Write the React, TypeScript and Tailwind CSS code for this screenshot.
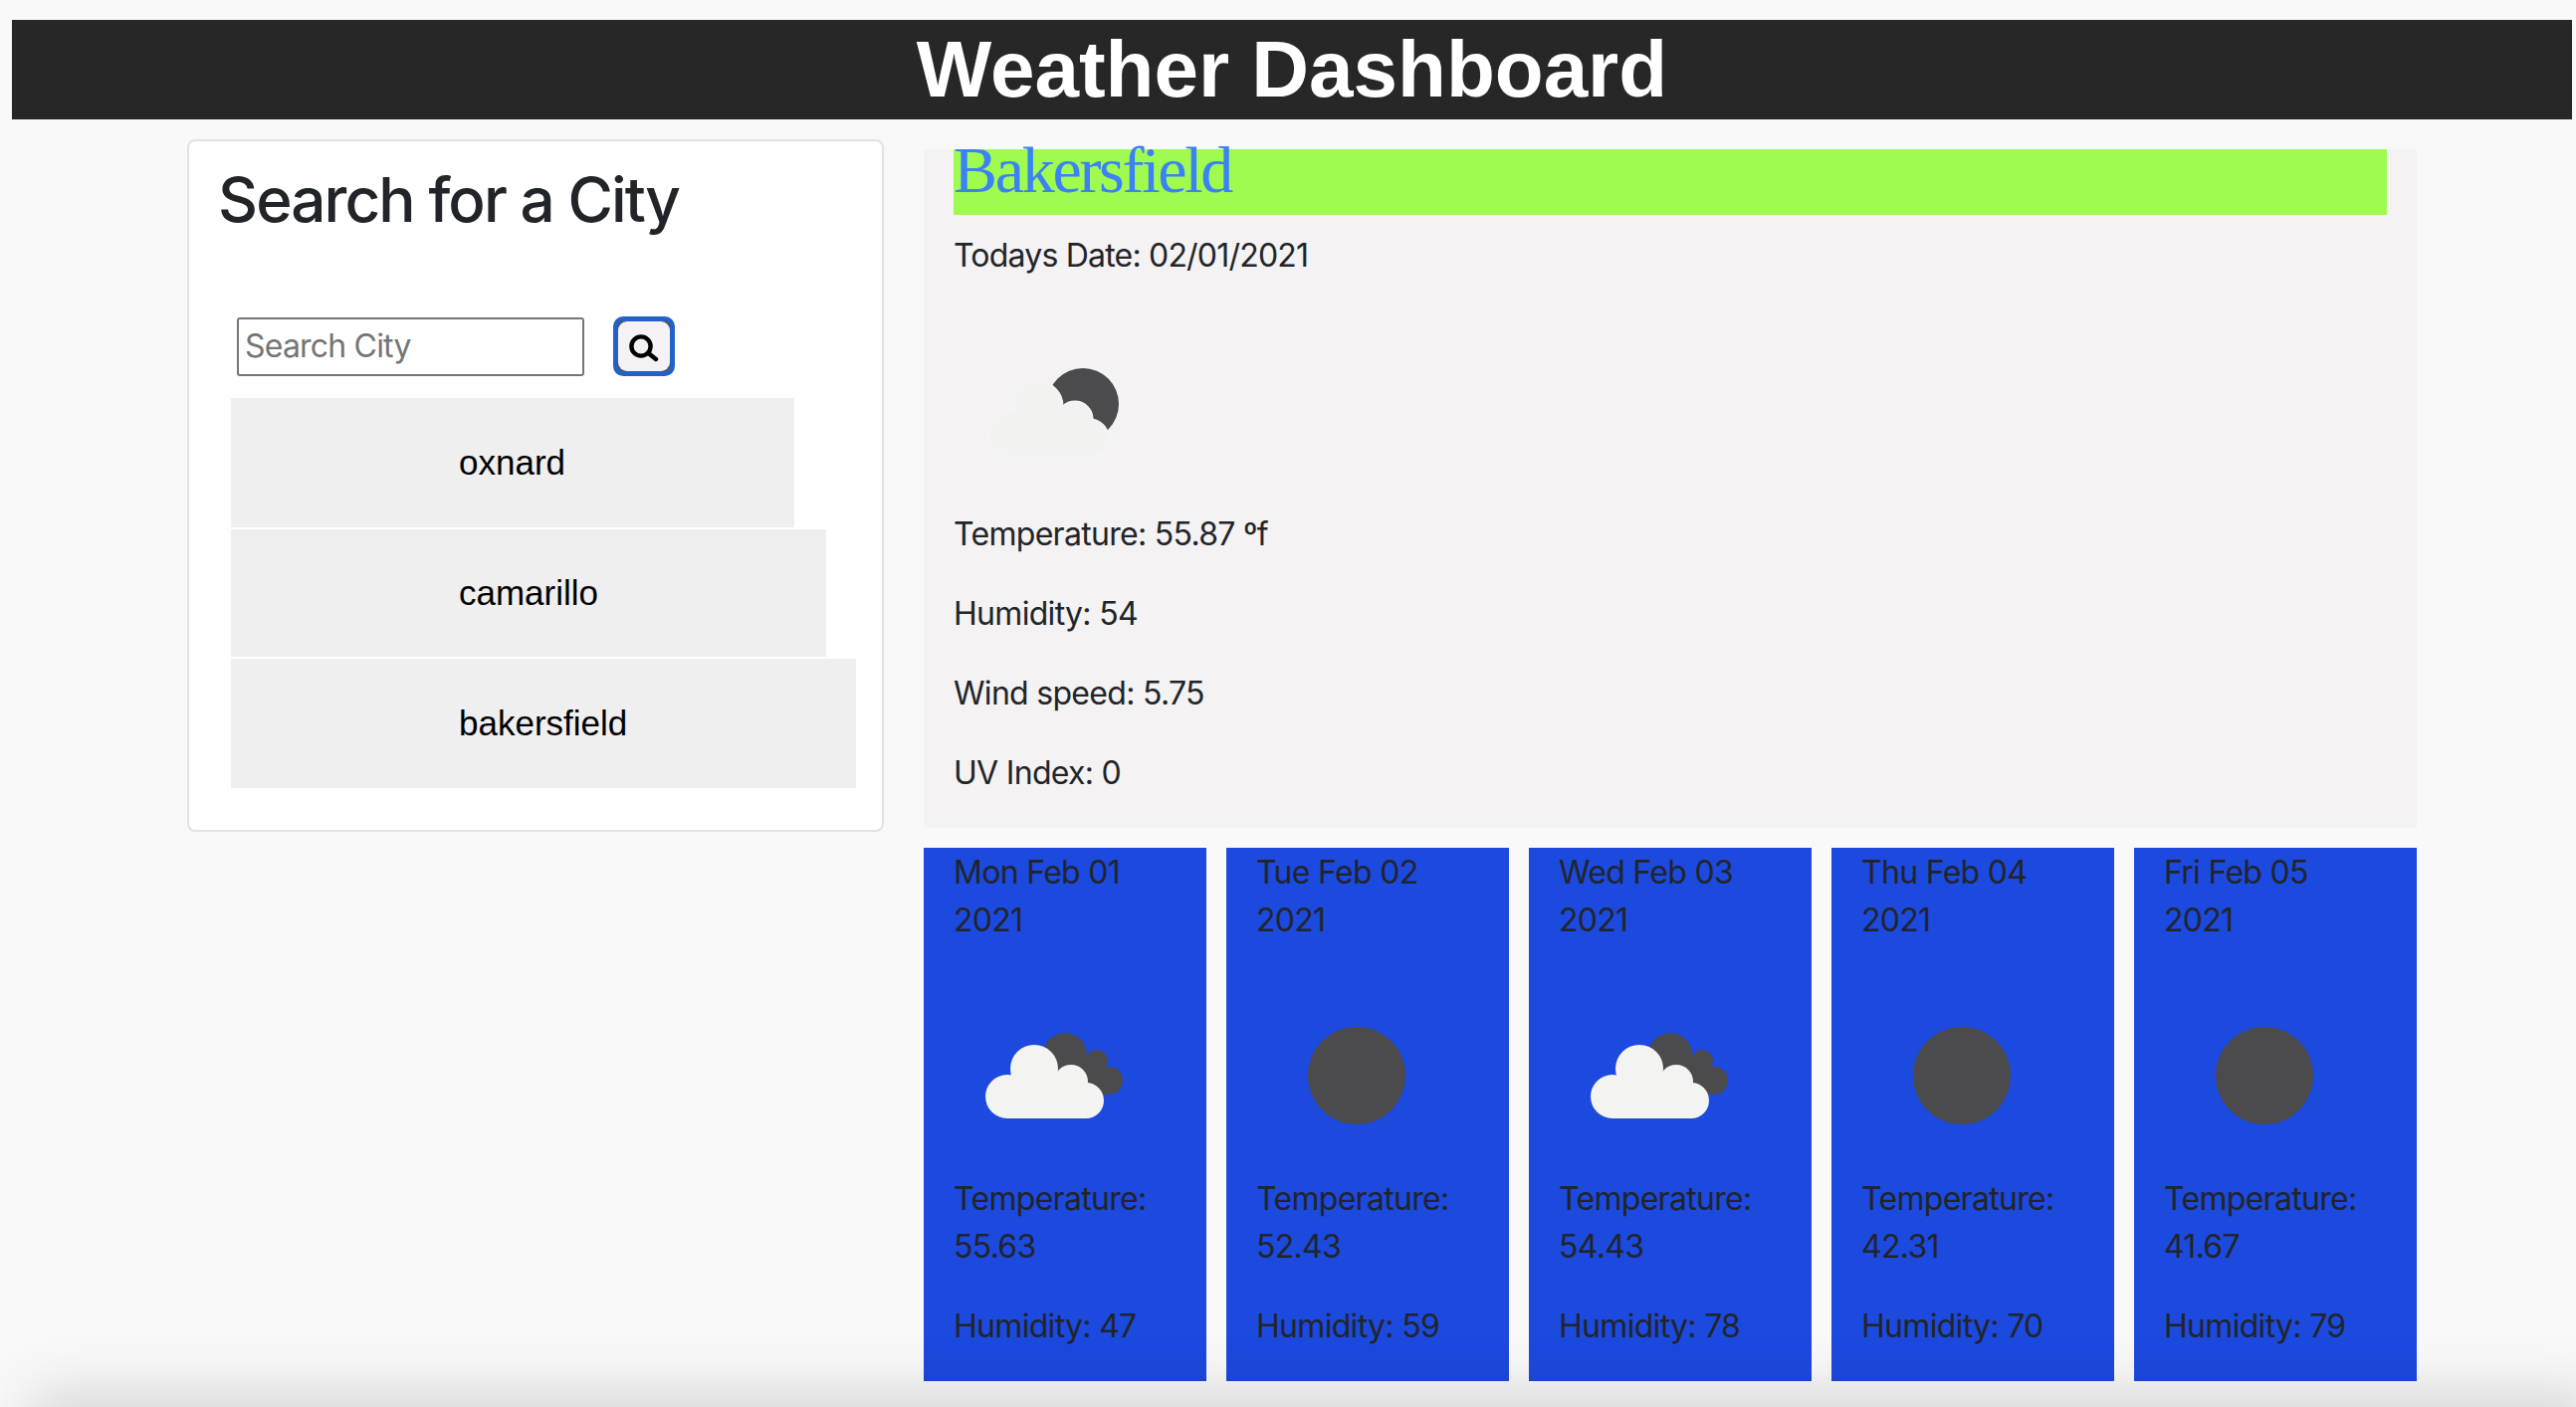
import React from "react";

const sans = "font-['Inter',sans-serif]";

function SearchIcon() {
  return (
    <svg width="32" height="32" viewBox="0 0 32 32" fill="none" stroke="#000" strokeWidth="4.4" strokeLinecap="round">
      <circle cx="13" cy="16" r="9.6" />
      <path d="M20.5 23l7.5 6" />
    </svg>
  );
}

function CloudShape({ fill, stroke, sw }: { fill: string; stroke?: string; sw?: number }) {
  return (
    <g fill={fill} stroke={stroke} strokeWidth={sw}>
      <circle cx="54" cy="122" r="22" />
      <circle cx="81" cy="94" r="24" />
      <circle cx="118" cy="107" r="17" />
      <circle cx="133" cy="126" r="18" />
      <rect x="54" y="106" width="80" height="38" />
    </g>
  );
}

function MainIcon() {
  return (
    <svg viewBox="0 0 200 200" width="200" height="200" className="block">
      <circle cx="130" cy="93" r="36" fill="#4b4a4d" />
      <g transform="translate(4,1)">
        <CloudShape fill="#f5f4f4" stroke="#f5f4f4" sw={3} />
        <CloudShape fill="#f2f2f0" />
      </g>
    </svg>
  );
}

function CloudsIcon() {
  return (
    <svg viewBox="0 0 200 200" width="200" height="200" className="block">
      <g fill="#4b4a4d">
        <circle cx="112" cy="80" r="22" />
        <circle cx="144" cy="86" r="11" />
        <circle cx="156" cy="106" r="14" />
        <rect x="112" y="84" width="40" height="36" />
      </g>
      <CloudShape fill="#f3f3f1" />
    </svg>
  );
}

function SphereIcon() {
  return (
    <svg viewBox="0 0 200 200" width="200" height="200" className="block">
      <circle cx="101" cy="101" r="49" fill="#4b4a4d" />
    </svg>
  );
}

const days = [
  { d: "Mon Feb 01", t: "55.63", h: "47", c: true },
  { d: "Tue Feb 02", t: "52.43", h: "59", c: false },
  { d: "Wed Feb 03", t: "54.43", h: "78", c: true },
  { d: "Thu Feb 04", t: "42.31", h: "70", c: false },
  { d: "Fri Feb 05", t: "41.67", h: "79", c: false },
];

const cities = [
  { n: "oxnard", w: "w-[566px]", h: "h-[130px]" },
  { n: "camarillo", w: "w-[598px]", h: "h-[128px]" },
  { n: "bakersfield", w: "w-[628px]", h: "h-[130px]" },
];

export default function App() {
  return (
    <div className={`relative h-[1414px] overflow-hidden bg-[#f9f9f9] pt-5 text-[32px] leading-[48px] text-[#212529] ${sans}`}>
      <header className="ml-3 mr-1 flex h-[100px] items-center justify-center bg-[#282728]">
        <h1 className="font-['Liberation_Sans',sans-serif] text-[80px] font-bold leading-none text-white">Weather Dashboard</h1>
      </header>

      <main className="ml-[188px] mt-5 flex items-start">
        <section className="h-[696px] w-[700px] rounded-lg border-2 border-[#e2e2e2] bg-white pl-[29px] pt-[20px]">
          <h2 className="text-[62px] font-medium leading-[77px] tracking-[-1.9px]">Search for a City</h2>
          <form className="ml-[19px] mt-[79px] flex items-center">
            <div className="flex h-[59px] w-[349px] items-center rounded-[3px] border-2 border-[#767676] bg-white pl-[6px] text-[32px] tracking-[-0.8px] text-[#757575]">
              Search City
            </div>
            <button type="button" className="ml-[29px] h-[60px] w-[62px] rounded-[10px] border-[5px] border-[#2360c8] bg-[#555555]">
              <span className="flex h-full w-full items-center justify-center rounded-[9px] bg-[#f4f2f3]">
                <SearchIcon />
              </span>
            </button>
          </form>
          <div className="ml-[13px] mt-[22px] flex flex-col gap-[2px]">
            {cities.map((c) => (
              <div key={c.n} className={`flex items-center bg-[#efefef] pl-[229px] font-['Liberation_Sans',sans-serif] text-[35px] text-black ${c.w} ${c.h}`}>
                {c.n}
              </div>
            ))}
          </div>
        </section>

        <div className="ml-[40px] mt-[10px] w-[1500px]">
          <section className="h-[682px] bg-[#f4f2f3] px-[30px]">
            <div className="h-[66px] bg-[#a0fb50] font-['Liberation_Serif',serif] text-[66px] leading-[66px] tracking-[-2.3px] text-[#3b82f6]">
              <span className="relative -top-[12px]">Bakersfield</span>
            </div>
            <p className="mb-8 mt-[17px] tracking-[-0.8px]">Todays Date: 02/01/2021</p>
            <MainIcon />
            <p className="mb-8 tracking-[-0.7px]">Temperature: 55.87 ºf</p>
            <p className="mb-8 tracking-[-0.7px]">Humidity: 54</p>
            <p className="mb-8 tracking-[-0.7px]">Wind speed: 5.75</p>
            <p className="tracking-[-0.7px]">UV Index: 0</p>
          </section>
          <div className="mt-5 flex gap-5">
            {days.map((x) => (
              <article key={x.d} className="h-[536px] w-[284px] bg-[#1c49de] pl-[30px] pt-[1px] tracking-[-0.7px]">
                <p>{x.d}<br />2021</p>
                <div className="mb-[1px] mt-[31px]">{x.c ? <CloudsIcon /> : <SphereIcon />}</div>
                <p>Temperature:<br />{x.t}</p>
                <p className="mt-8">Humidity: {x.h}</p>
              </article>
            ))}
          </div>
        </div>
      </main>

      <div className="pointer-events-none absolute left-[50px] right-0 top-[1420px] h-20 shadow-[0_0_60px_20px_rgba(0,0,0,0.15)]" />
    </div>
  );
}
